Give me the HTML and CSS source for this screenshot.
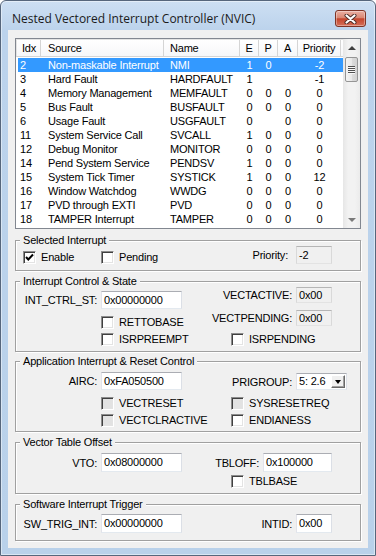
FILE: index.html
```html
<!DOCTYPE html>
<html lang="en">
<head>
<meta charset="utf-8">
<title>Nested Vectored Interrupt Controller (NVIC)</title>
<link rel="stylesheet" href="styles.css">
</head>
<body>
<div class="window">
  <div class="titlebar">
    <div class="title">Nested Vectored Interrupt Controller (NVIC)</div>
    <div class="close">
      <svg width="13" height="10" viewBox="0 0 13 10">
        <path d="M2.5 1.5 L10.5 8.5 M10.5 1.5 L2.5 8.5" stroke="#4a2a24" stroke-width="4" stroke-linecap="round"/>
        <path d="M2.5 1.5 L10.5 8.5 M10.5 1.5 L2.5 8.5" stroke="#fff" stroke-width="2.2" stroke-linecap="round"/>
      </svg>
    </div>
  </div>
  <div class="frame">
    <div class="client">

      <!-- interrupt list -->
      <div class="list">
        <div class="lv">
          <div class="hdr">
            <span class="i">Idx</span><span class="s">Source</span><span class="n">Name</span><span class="e">E</span><span class="p">P</span><span class="a">A</span><span class="pr">Priority</span>
          </div>
          <div class="rows">
            <div class="row sel"><span class="i">2</span><span class="s">Non-maskable Interrupt</span><span class="n">NMI</span><span class="e">1</span><span class="p">0</span><span class="a"></span><span class="pr">-2</span></div>
            <div class="row"><span class="i">3</span><span class="s">Hard Fault</span><span class="n">HARDFAULT</span><span class="e">1</span><span class="p"></span><span class="a"></span><span class="pr">-1</span></div>
            <div class="row"><span class="i">4</span><span class="s">Memory Management</span><span class="n">MEMFAULT</span><span class="e">0</span><span class="p">0</span><span class="a">0</span><span class="pr">0</span></div>
            <div class="row"><span class="i">5</span><span class="s">Bus Fault</span><span class="n">BUSFAULT</span><span class="e">0</span><span class="p">0</span><span class="a">0</span><span class="pr">0</span></div>
            <div class="row"><span class="i">6</span><span class="s">Usage Fault</span><span class="n">USGFAULT</span><span class="e">0</span><span class="p"></span><span class="a">0</span><span class="pr">0</span></div>
            <div class="row"><span class="i">11</span><span class="s">System Service Call</span><span class="n">SVCALL</span><span class="e">1</span><span class="p">0</span><span class="a">0</span><span class="pr">0</span></div>
            <div class="row"><span class="i">12</span><span class="s">Debug Monitor</span><span class="n">MONITOR</span><span class="e">0</span><span class="p">0</span><span class="a">0</span><span class="pr">0</span></div>
            <div class="row"><span class="i">14</span><span class="s">Pend System Service</span><span class="n">PENDSV</span><span class="e">1</span><span class="p">0</span><span class="a">0</span><span class="pr">0</span></div>
            <div class="row"><span class="i">15</span><span class="s">System Tick Timer</span><span class="n">SYSTICK</span><span class="e">1</span><span class="p">0</span><span class="a">0</span><span class="pr">12</span></div>
            <div class="row"><span class="i">16</span><span class="s">Window Watchdog</span><span class="n">WWDG</span><span class="e">0</span><span class="p">0</span><span class="a">0</span><span class="pr">0</span></div>
            <div class="row"><span class="i">17</span><span class="s">PVD through EXTI</span><span class="n">PVD</span><span class="e">0</span><span class="p">0</span><span class="a">0</span><span class="pr">0</span></div>
            <div class="row"><span class="i">18</span><span class="s">TAMPER Interrupt</span><span class="n">TAMPER</span><span class="e">0</span><span class="p">0</span><span class="a">0</span><span class="pr">0</span></div>
          </div>
        </div>
        <div class="vscroll">
          <div class="arrow"><i class="up"></i></div>
          <div class="thumb"><i class="grip"></i></div>
          <div class="track"></div>
          <div class="arrow"><i class="down"></i></div>
        </div>
      </div>

      <!-- Selected Interrupt -->
      <div class="group g1">
        <div class="legend">Selected Interrupt</div>
        <div class="r">
          <div class="c1 pl7"><span class="cb mt4"><i class="chk on"><svg width="11" height="11" viewBox="0 0 11 11"><path d="M2 5 L4.3 7.5 L9 2.5" fill="none" stroke="#000" stroke-width="2"/></svg></i>Enable</span></div>
          <div class="c2"><span class="cb mt4"><i class="chk"></i>Pending</span></div>
          <div class="fld right mtm1"><span class="rlab gap8">Priority:</span><span class="edit ro w36 h18">-2</span></div>
        </div>
      </div>

      <!-- Interrupt Control & State -->
      <div class="group g2">
        <div class="legend">Interrupt Control &amp; State</div>
        <div class="r">
          <div class="fld mt3"><span class="lab">INT_CTRL_ST:</span><span class="edit w81 h18">0x00000000</span></div>
          <div class="fld right mtm1"><span class="rlab">VECTACTIVE:</span><span class="edit ro w36 h16">0x00</span></div>
        </div>
        <div class="r">
          <div class="c1"></div>
          <div class="c2 auto"><span class="cb mt7"><i class="chk"></i>RETTOBASE</span></div>
          <div class="fld right mt1"><span class="rlab">VECTPENDING:</span><span class="edit ro w36 h16">0x00</span></div>
        </div>
        <div class="r">
          <div class="c1"></div>
          <div class="c2"><span class="cb mt4"><i class="chk"></i>ISRPREEMPT</span></div>
          <span class="cb mt4"><i class="chk"></i>ISRPENDING</span>
        </div>
      </div>

      <!-- Application Interrupt & Reset Control -->
      <div class="group g3">
        <div class="legend">Application Interrupt &amp; Reset Control</div>
        <div class="r">
          <div class="fld mt4"><span class="lab">AIRC:</span><span class="edit w81 h18">0xFA050500</span></div>
          <div class="fld right combo-row mt5"><span class="rlab">PRIGROUP:</span>
            <span class="combo"><span class="val">5: 2.6</span><span class="drop"><i class="down-blk"></i></span></span>
          </div>
        </div>
        <div class="r">
          <div class="c1"></div>
          <div class="c2"><span class="cb mt7"><i class="chk dis"></i>VECTRESET</span></div>
          <span class="cb mt7"><i class="chk dis"></i>SYSRESETREQ</span>
        </div>
        <div class="r">
          <div class="c1"></div>
          <div class="c2"><span class="cb mt4"><i class="chk dis"></i>VECTCLRACTIVE</span></div>
          <span class="cb mt4"><i class="chk"></i>ENDIANESS</span>
        </div>
      </div>

      <!-- Vector Table Offset -->
      <div class="group g4">
        <div class="legend">Vector Table Offset</div>
        <div class="r">
          <div class="fld mt4"><span class="lab">VTO:</span><span class="edit w81">0x08000000</span></div>
          <div class="fld right mt4"><span class="rlab">TBLOFF:</span><span class="edit w69">0x100000</span></div>
        </div>
        <div class="r">
          <div class="c1"></div>
          <div class="c2"></div>
          <span class="cb mt3"><i class="chk"></i>TBLBASE</span>
        </div>
      </div>

      <!-- Software Interrupt Trigger -->
      <div class="group g5">
        <div class="legend">Software Interrupt Trigger</div>
        <div class="r">
          <div class="fld mt3"><span class="lab">SW_TRIG_INT:</span><span class="edit w81">0x00000000</span></div>
          <div class="fld right mt3"><span class="rlab">INTID:</span><span class="edit w36">0x00</span></div>
        </div>
      </div>

    </div>
  </div>
</div>
</body>
</html>
```

FILE: styles.css
```css
* { box-sizing: border-box; }
html, body { margin: 0; }
body {
  font-family: "Liberation Sans", Arial, sans-serif;
  font-size: 11px;
  letter-spacing: -0.2px;
  color: #000;
  background: #fff;
}

/* window frame */
.window {
  width: 376px;
  height: 556px;
  border: 1px solid #56667c;
  border-radius: 6px 6px 0 0;
  background: linear-gradient(#cddff3, #bcd3ec 29px, #b9d1ea);
  display: flex;
  flex-direction: column;
  box-shadow: inset 0 0 0 1px rgba(255,255,255,.45);
}
.titlebar { height: 29px; display: flex; align-items: flex-start; }
.title {
  flex: 1;
  margin: 10px 0 0 11px;
  font-family: "Open Sans", "Noto Sans", sans-serif;
  font-size: 12px;
  line-height: 16px;
  letter-spacing: 0;
  color: #1a1a1a;
}
.close {
  width: 31px;
  height: 17px;
  margin: 9px 9px 0 0;
  border: 1px solid #7d3426;
  border-radius: 3px;
  background: linear-gradient(#eab0a3, #d98773 45%, #c4452c 52%, #d5705a);
  box-shadow: inset 0 0 0 1px rgba(255,255,255,.35);
  display: flex;
  align-items: center;
  justify-content: center;
}
.close svg { display: block; }
.frame { flex: 1; padding: 0 7px 7px; }
.client { height: 100%; background: #f0f0f0; padding: 8px 7px 7px; }

/* list view */
.list {
  display: flex;
  height: 191px;
  border: 1px solid #828790;
  background: #fff;
}
.lv { width: 327px; overflow: hidden; }
.hdr {
  display: flex;
  height: 18px;
  background: linear-gradient(#fff, #f6f7f9);
  border-bottom: 1px solid #d5d5d5;
  border-top: 1px solid #e3e3e3;
}
.hdr span { border-right: 1px solid #d5d5d5; line-height: 16px; white-space: nowrap; }
.hdr .i { width: 25px; padding-left: 5px; border-left: 1px solid #e3e3e3; }
.rows { padding-top: 1px; }
.row { display: flex; height: 14px; line-height: 14px; margin-left: 2px; white-space: nowrap; }
.row.sel { background: #3399ff; color: #fff; }
.row .i { width: 23px; padding-left: 2px; }
.s { width: 123px; padding-left: 7px; }
.n { width: 76px; padding-left: 6px; }
.e, .p { width: 19px; text-align: center; }
.a { width: 20px; text-align: center; }
.pr { width: 43px; text-align: center; }

.vscroll {
  width: 17px;
  display: flex;
  flex-direction: column;
  background: linear-gradient(to right, #e6e6e6, #f2f2f2 30%, #f2f2f2 70%, #ebebeb);
}
.arrow { height: 17px; display: flex; align-items: center; justify-content: center; }
.up { border: 4px solid transparent; border-top: 0; border-bottom: 4px solid #404040; }
.down { border: 4px solid transparent; border-bottom: 0; border-top: 4px solid #7a7a7a; }
.thumb {
  height: 25px;
  margin: 1px 2px 0;
  border: 1px solid #959595;
  border-radius: 2px;
  background: linear-gradient(to right, #f4f4f4, #e9e9e9 50%, #dcdcdc 51%, #d2d2d2);
  display: flex;
  align-items: center;
  justify-content: center;
}
.grip {
  width: 7px;
  height: 8px;
  background: repeating-linear-gradient(#505050 0 1px, #f8f8f8 1px 2px);
}
.track { flex: 1; }

/* group boxes */
.group {
  border: 1px solid #a0a0a0;
  box-shadow: inset 1px 1px #fff, 1px 1px #fff;
}
.g1 { margin-top: 11px; padding-bottom: 6px; }
.g2 { margin-top: 10px; padding-bottom: 5px; }
.g3 { margin-top: 9px; padding-bottom: 4px; }
.g4 { margin-top: 10px; padding-bottom: 5px; }
.g5 { margin-top: 10px; padding-bottom: 7px; }
.legend {
  width: max-content;
  height: 13px;
  line-height: 13px;
  margin: -7px 0 0 4px;
  padding: 0 3px;
  background: #f0f0f0;
}

.r { display: flex; align-items: flex-start; }
.c1 { width: 85px; flex: none; }
.c2 { width: 130px; flex: none; }
.c2.auto { width: auto; }
.pl7 { padding-left: 7px; }
.mt1 { margin-top: 1px; }
.mt3 { margin-top: 3px; }
.mt4 { margin-top: 4px; }
.mt5 { margin-top: 5px; }
.mt7 { margin-top: 7px; }
.mtm1 { margin-top: -1px; }

.fld { display: flex; align-items: center; }
.lab { width: 85px; text-align: right; padding-right: 4px; white-space: nowrap; }
.fld.right { margin-left: auto; margin-right: 28px; }
.fld.combo-row { margin-right: 13px; }
.rlab { padding-right: 4px; white-space: nowrap; }
.rlab.gap8 { padding-right: 8px; }

.edit {
  height: 19px;
  line-height: 17px;
  padding: 0 2px;
  border: 1px solid;
  border-color: #abadb3 #dbdfe6 #e3e9ef #e2e3ea;
  background: #fff;
  white-space: nowrap;
}
.edit.ro { background: #f0f0f0; border-color: #b5b5b5 #d9d9d9 #e3e3e3 #d9d9d9; }
.h18 { height: 18px; line-height: 16px; }
.h16 { height: 16px; line-height: 14px; }
.w81 { width: 81px; }
.w69 { width: 69px; }
.w36 { width: 36px; }

.combo {
  width: 51px;
  height: 17px;
  border: 1px solid;
  border-color: #abadb3 #dbdfe6 #e3e9ef #e2e3ea;
  background: #fff;
  display: flex;
  align-items: center;
}
.combo .val { flex: 1; padding-left: 2px; line-height: 15px; }
.drop {
  width: 14px;
  height: 13px;
  margin-right: 1px;
  border: 1px solid;
  border-color: #fff #696969 #696969 #fff;
  background: #f0f0f0;
  box-shadow: inset -1px -1px #a0a0a0;
  display: flex;
  align-items: center;
  justify-content: center;
}
.down-blk { border: 3.5px solid transparent; border-bottom: 0; border-top: 4px solid #000; }

/* check boxes */
.cb { display: flex; align-items: center; gap: 5px; line-height: 13px; white-space: nowrap; }
.chk {
  width: 13px;
  height: 13px;
  flex: none;
  border: 1px solid;
  border-color: #8c8c8c #fff #fff #8c8c8c;
  box-shadow: inset 1px 1px #404040, inset -1px -1px #e3e3e3;
  background: #fff;
  display: flex;
  align-items: center;
  justify-content: center;
}
.chk.dis { background: #e2e2e2; }
.chk svg { display: block; }
```
